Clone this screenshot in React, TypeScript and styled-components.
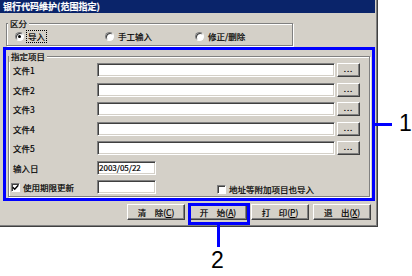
import React from "react";
import styled, { createGlobalStyle } from "styled-components";

const GlobalStyle = createGlobalStyle`
  html, body { margin: 0; padding: 0; background: #ffffff; }
  body { font-family: "Noto Sans CJK SC", "Noto Sans", sans-serif; color: #000; }
  * { box-sizing: border-box; }
`;

const Stage = styled.div`
  position: relative;
  width: 412px;
  height: 276px;
  overflow: hidden;
  background: #fff;
`;

const Window = styled.div`
  width: 378px;
  height: 227px;
  background: #d4d0c8;
  border-right: 1px solid #404040;
  border-bottom: 1px solid #404040;
  box-shadow: inset -1px -1px 0 #808080;
  display: flex;
  flex-direction: column;
  font-size: 8.5px;
  line-height: 12px;
  -webkit-text-stroke: 0.2px currentColor;
`;

const TitleBar = styled.div`
  height: 13px;
  margin-right: 2px;
  background: #0a246a;
  color: #fff;
  font-weight: bold;
  font-size: 9px;
  line-height: 13px;
  padding-left: 3px;
  white-space: nowrap;
`;

const GroupBox = styled.fieldset<{ $width: number; $top: number; $left: number }>`
  margin: ${(p) => p.$top}px 0 0 ${(p) => p.$left}px;
  padding: 0;
  width: ${(p) => p.$width}px;
  min-width: 0;
  border: 1px solid #808080;
  box-shadow: inset 1px 1px 0 #fff, 1px 1px 0 #fff;
`;

const Legend = styled.legend<{ $offset: number }>`
  padding: 0 2px;
  margin-left: ${(p) => p.$offset}px;
  line-height: 12px;
  background: #d4d0c8;
`;

const RadioRow = styled.div`
  display: flex;
  padding: 1px 0 3px 8px;
`;

const RadioItem = styled.label`
  width: 90px;
  display: flex;
  align-items: center;
  gap: 3px;
  height: 12px;
`;

const RadioCircle = styled.span<{ $checked?: boolean }>`
  position: relative;
  width: 9px;
  height: 9px;
  border-radius: 50%;
  background: #fff;
  border: 1px solid;
  border-color: #808080 #fff #fff #808080;
  box-shadow: inset 1px 1px 0 #404040;
  flex: none;
  &::after {
    content: "";
    display: ${(p) => (p.$checked ? "block" : "none")};
    position: absolute;
    left: 2px;
    top: 2px;
    width: 3px;
    height: 3px;
    border-radius: 50%;
    background: #000;
  }
`;

const RadioText = styled.span<{ $focused?: boolean }>`
  padding: 0 1px;
  line-height: 11px;
  outline: ${(p) => (p.$focused ? "1px dotted #000" : "none")};
`;

const Highlight = styled.div`
  margin: 1px 0 0 3px;
  width: 372px;
  border: 3px solid #0000ff;
  padding: 0 2px 1px 2px;
`;

const Rows = styled.div`
  display: flex;
  flex-direction: column;
  gap: 5.5px;
  padding: 1px 0 2px 4px;
`;

const FieldRow = styled.div`
  display: flex;
  align-items: center;
  height: 14px;
`;

const FieldLabel = styled.span`
  width: 84px;
  flex: none;
  white-space: nowrap;
`;

const TextBox = styled.div<{ $width: number }>`
  width: ${(p) => p.$width}px;
  height: 14px;
  flex: none;
  background: #fff;
  border: 1px solid;
  border-color: #808080 #fff #fff #808080;
  box-shadow: inset 1px 1px 0 #404040, inset -1px -1px 0 #d4d0c8;
  padding-left: 1px;
  line-height: 12px;
  font-size: 8px;
  white-space: nowrap;
`;

const raised = `
  background: #d4d0c8;
  border: 1px solid;
  border-color: #fff #404040 #404040 #fff;
  box-shadow: inset -1px -1px 0 #808080;
`;

const BrowseButton = styled.div`
  ${raised}
  width: 23px;
  height: 14px;
  margin-left: 2px;
  flex: none;
  display: flex;
  align-items: center;
  justify-content: center;
  font-size: 8px;
  line-height: 1;
  letter-spacing: 1px;
  padding-bottom: 2px;
`;

const CheckLabel = styled.label<{ $shift?: number; $width?: number }>`
  display: flex;
  align-items: center;
  gap: 3px;
  flex: none;
  white-space: nowrap;
  margin-left: ${(p) => p.$shift ?? 0}px;
  margin-top: ${(p) => (p.$shift && p.$shift > 0 ? 4 : 0)}px;
  width: ${(p) => (p.$width ? `${p.$width}px` : "auto")};
`;

const CheckBox = styled.span`
  width: 9px;
  height: 9px;
  flex: none;
  background: #fff;
  border: 1px solid;
  border-color: #808080 #fff #fff #808080;
  box-shadow: inset 1px 1px 0 #404040;
  display: flex;
  align-items: center;
  justify-content: center;
`;

const ButtonRow = styled.div`
  display: flex;
  gap: 4px;
  margin: 3px 0 0 127px;
`;

const PushButton = styled.div<{ $marked?: boolean }>`
  ${raised}
  position: relative;
  width: 58px;
  height: 16px;
  display: flex;
  align-items: center;
  justify-content: center;
  line-height: 12px;
  white-space: nowrap;
  &::after {
    content: "";
    display: ${(p) => (p.$marked ? "block" : "none")};
    position: absolute;
    left: -2px;
    top: -2px;
    right: -4px;
    bottom: -6px;
    border: 3px solid #0000ff;
  }
`;

const Connector = styled.div<{ $x: number; $y: number; $w: number; $h: number }>`
  position: absolute;
  left: ${(p) => p.$x}px;
  top: ${(p) => p.$y}px;
  width: ${(p) => p.$w}px;
  height: ${(p) => p.$h}px;
  background: #0000ff;
`;

const Callout = styled.div<{ $x: number; $y: number }>`
  position: absolute;
  left: ${(p) => p.$x}px;
  top: ${(p) => p.$y}px;
  font-family: "Liberation Sans", Arial, sans-serif;
  font-size: 23px;
  line-height: 23px;
  color: #000;
`;

const Check = () => (
  <svg width="7" height="7" viewBox="0 0 7 7">
    <path d="M0.8 3.2 L2.7 5.2 L6.3 1.2" fill="none" stroke="#000" strokeWidth="1.4" />
  </svg>
);

const files = ["文件1", "文件2", "文件3", "文件4", "文件5"];

const buttons = [
  { text: "清　除", key: "C" },
  { text: "开　始", key: "A", marked: true },
  { text: "打　印", key: "P" },
  { text: "退　出", key: "X" },
];

export default function App() {
  return (
    <Stage>
      <GlobalStyle />
      <Window>
        <TitleBar>银行代码维护(范围指定)</TitleBar>
        <GroupBox $width={287} $top={4} $left={6}>
          <Legend $offset={1}>区分</Legend>
          <RadioRow>
            <RadioItem>
              <RadioCircle $checked />
              <RadioText $focused>导入</RadioText>
            </RadioItem>
            <RadioItem>
              <RadioCircle />
              <RadioText>手工输入</RadioText>
            </RadioItem>
            <RadioItem>
              <RadioCircle />
              <RadioText>修正/删除</RadioText>
            </RadioItem>
          </RadioRow>
        </GroupBox>
        <Highlight>
          <GroupBox $width={362} $top={0} $left={0}>
            <Legend $offset={0}>指定项目</Legend>
            <Rows>
              {files.map((f) => (
                <FieldRow key={f}>
                  <FieldLabel>{f}</FieldLabel>
                  <TextBox $width={238} />
                  <BrowseButton>...</BrowseButton>
                </FieldRow>
              ))}
              <FieldRow>
                <FieldLabel>输入日</FieldLabel>
                <TextBox $width={59}>2003/05/22</TextBox>
              </FieldRow>
              <FieldRow>
                <CheckLabel $shift={-2} $width={86}>
                  <CheckBox>
                    <Check />
                  </CheckBox>
                  使用期限更新
                </CheckLabel>
                <TextBox $width={59} />
                <CheckLabel $shift={61}>
                  <CheckBox />
                  地址等附加项目也导入
                </CheckLabel>
              </FieldRow>
            </Rows>
          </GroupBox>
        </Highlight>
        <ButtonRow>
          {buttons.map((b) => (
            <PushButton key={b.key} $marked={b.marked}>
              {b.text}(<u>{b.key}</u>)
            </PushButton>
          ))}
        </ButtonRow>
      </Window>
      <Connector $x={374} $y={123} $w={18} $h={3} />
      <Callout $x={399} $y={112}>1</Callout>
      <Connector $x={217} $y={224} $w={3} $h={23} />
      <Callout $x={211} $y={249}>2</Callout>
    </Stage>
  );
}
